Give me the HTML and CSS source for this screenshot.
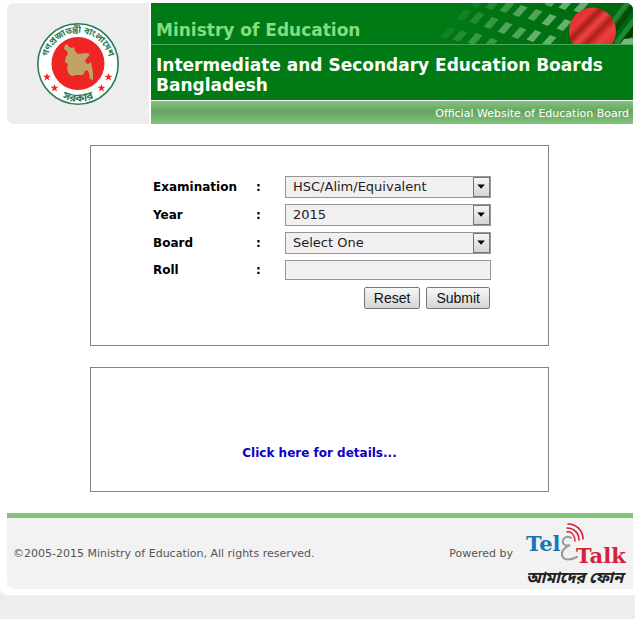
FILE: index.html
```html
<!DOCTYPE html>
<html lang="en">
<head>
<meta charset="utf-8">
<title>Intermediate and Secondary Education Boards Bangladesh</title>
<link rel="stylesheet" href="styles.css">
</head>
<body>
<div class="page">
  <header class="header">
    <div class="emblem">
      <svg width="84" height="84" viewBox="36 22 84 84" role="img" aria-label="Government seal">
        <defs>
          <path id="arc-top" d="M47.200 69A31.200 31.200 0 1 1 108.800 69"/>
          <path id="arc-bottom" d="M44 80A37.500 37.500 0 0 0 112 80"/>
          <path id="star" d="M0-4L1-1.200H4L1.600.500 2.500 3.500 0 1.700-2.500 3.500-1.600.500-4-1.200H-1Z"/>
        </defs>
        <circle cx="78" cy="64" r="40.200" fill="#fff" stroke="#2c7c5a" stroke-width="1.600"/>
        <circle cx="78" cy="63.500" r="26.500" fill="#ee2524"/>
        <path fill="#c3a268" d="M65 45l2-1 2 3 3 1 2-1 1 4 3 3 8-1 4 1-2 3-3 3 1 3 2 1 3-2 1 6 1 4 0 8-3-1-1-6-2-3-2 1-2 4-7 0-4 1-3-2-2-5 1-5-3-2 1-6 2-1-1-4-3-2z"/>
        <g fill="#ee2524">
          <use href="#star" x="47" y="77"/><use href="#star" x="54.500" y="88"/>
          <use href="#star" x="108.500" y="77"/><use href="#star" x="101.500" y="88"/>
        </g>
        <g class="seal-text">
          <text><textPath href="#arc-top" startOffset="50%" text-anchor="middle">গণপ্রজাতন্ত্রী বাংলাদেশ</textPath></text>
          <text class="seal-bottom"><textPath href="#arc-bottom" startOffset="50%" text-anchor="middle">সরকার</textPath></text>
        </g>
      </svg>
    </div>
    <div class="banner">
      <div class="ministry">
        <svg class="flag" width="200" height="41" viewBox="433 3 200 41" aria-hidden="true">
          <defs>
            <path id="tile" d="M-7.500 3.500L-1 6 7.500-3.500 1-6Z"/>
            <linearGradient id="cloth" x1="0" y1="0" x2="1" y2="1">
              <stop offset="0" stop-color="#d92f2f"/><stop offset=".27" stop-color="#e83838"/>
              <stop offset=".36" stop-color="#a91d1b"/><stop offset=".46" stop-color="#f04545"/>
              <stop offset=".57" stop-color="#b01f1c"/><stop offset=".68" stop-color="#ef4040"/>
              <stop offset="1" stop-color="#bd2220"/>
            </linearGradient>
            <linearGradient id="shade" x1="0" x2="1">
              <stop offset="0" stop-color="#005c0b" stop-opacity="0"/><stop offset="1" stop-color="#004f08" stop-opacity=".5"/>
            </linearGradient>
            <filter id="soft"><feGaussianBlur stdDeviation=".6"/></filter>
          </defs>
          <path fill="url(#shade)" d="M455 3H633V44H430Z"/>
          <g filter="url(#soft)">
            <g fill="#62b26d">
              <g opacity=".18"><use href="#tile" x="464" y="15"/><use href="#tile" x="448" y="33"/><use href="#tile" x="478" y="2"/></g>
              <g opacity=".35"><use href="#tile" x="477" y="18"/><use href="#tile" x="460" y="36"/><use href="#tile" x="493" y="4"/></g>
              <g opacity=".58"><use href="#tile" x="491" y="23"/><use href="#tile" x="475" y="39"/><use href="#tile" x="507" y="7"/><use href="#tile" x="490" y="44"/></g>
              <g opacity=".8"><use href="#tile" x="505" y="28"/><use href="#tile" x="520" y="11"/><use href="#tile" x="519" y="33"/><use href="#tile" x="535" y="15"/><use href="#tile" x="552" y="1"/></g>
              <use href="#tile" x="534" y="36"/><use href="#tile" x="549" y="20"/><use href="#tile" x="564" y="25"/>
              <use href="#tile" x="549" y="41"/><use href="#tile" x="566" y="4"/><use href="#tile" x="581" y="7"/>
            </g>
            <g fill="none" stroke-width="5">
              <path stroke="#004b08" d="M635 4L604 44"/>
              <path stroke="#238735" d="M629 1L612 23M637 16L616 44"/>
              <path stroke="#003f06" d="M637 25L622 44"/>
            </g>
            <path fill="#78b97e" d="M624 39l9-1v6h-13z"/>
            <circle cx="592.500" cy="31" r="23.500" fill="url(#cloth)"/>
          </g>
        </svg>
        <span class="ministry-name">Ministry of Education</span>
      </div>
      <h1 class="title">Intermediate and Secondary Education Boards Bangladesh</h1>
      <div class="tagline">Official Website of Education Board</div>
    </div>
  </header>

  <main class="main">
    <form class="panel form-panel">
      <div class="fields">
        <label for="exam">Examination</label><b>:</b>
        <div class="select-box">
          <select id="exam"><option>HSC/Alim/Equivalent</option></select>
          <svg class="arrow" viewBox="0 0 18 20" aria-hidden="true"><path d="M4 7h9l-4.500 5z"/></svg>
        </div>
        <label for="year">Year</label><b>:</b>
        <div class="select-box">
          <select id="year"><option>2015</option></select>
          <svg class="arrow" viewBox="0 0 18 20" aria-hidden="true"><path d="M4 7h9l-4.500 5z"/></svg>
        </div>
        <label for="board">Board</label><b>:</b>
        <div class="select-box">
          <select id="board"><option>Select One</option></select>
          <svg class="arrow" viewBox="0 0 18 20" aria-hidden="true"><path d="M4 7h9l-4.500 5z"/></svg>
        </div>
        <label for="roll">Roll</label><b>:</b>
        <input id="roll" type="text">
        <div class="actions">
          <button type="reset">Reset</button>
          <button type="submit">Submit</button>
        </div>
      </div>
    </form>
    <section class="panel link-panel">
      <a href="#">Click here for details...</a>
    </section>
  </main>

  <footer class="footer">
    <p class="copyright">©2005-2015 Ministry of Education, All rights reserved.</p>
    <p class="powered">Powered by</p>
    <svg class="logo" width="108" height="70" viewBox="522 519 108 70" role="img" aria-label="TeleTalk">
      <g fill="none" stroke-linecap="round">
        <path stroke="#999" stroke-width="2" d="M571 538C567 535 562 538 563 543C564 546 568 546 570 545C565 547 561 551 562 555C563 560 569 561 577 557"/>
        <path stroke="#d2223c" stroke-width="1.600" d="M568 524C576 524 583 530 583 539M567 528C574 528 579 533 579 540"/>
        <path stroke="#d2223c" stroke-width="1.400" d="M567 532C571 531 575 535 575 541"/>
      </g>
      <text class="logo-name" x="526" y="551" fill="#1976b6">Tel</text>
      <text class="logo-name" x="576" y="563" fill="#d2223c">Talk</text>
      <text class="logo-tag" x="526" y="583">আমাদের ফোন</text>
    </svg>
  </footer>
</div>
</body>
</html>
```
FILE: styles.css
```css
* { box-sizing: border-box; }

body {
  margin: 0;
  background: #ededed;
  font-family: Verdana, "DejaVu Sans", sans-serif;
  font-size: 12px;
  color: #000;
}

.page {
  padding: 3px 2px 6px 7px;
  background: #fff;
  border-bottom-left-radius: 7px;
}

.header {
  display: grid;
  grid-template-columns: 142px 1fr;
  gap: 2px;
}

.emblem {
  display: flex;
  align-items: center;
  justify-content: center;
  background: #ededed;
  border-radius: 7px 0 0 7px;
}

.seal-text {
  font: bold 9px "Noto Sans Bengali", "Noto Sans", sans-serif;
  fill: #2c7c5a;
}

.seal-bottom { font-size: 11px; }

.banner {
  overflow: hidden;
  border-top-right-radius: 7px;
  background: #007a14;
}

.ministry {
  position: relative;
  height: 42px;
  padding: 17px 5px 0;
  border-bottom: 1px solid #4da85a;
  line-height: 20px;
}

.flag {
  position: absolute;
  top: 0;
  right: 0;
}

.ministry-name {
  position: relative;
  color: #86dc80;
  font-size: 17px;
  font-weight: bold;
}

.title {
  height: 55px;
  margin: 0;
  padding: 10px 5px 5px;
  color: #fff;
  font-size: 17px;
  line-height: 20px;
}

.tagline {
  height: 24px;
  padding: 2px 4px 0;
  border-top: 1px solid #fff;
  background: linear-gradient(#85c07f, #64a661 45%, #82c27d);
  color: #fff;
  font-size: 11px;
  line-height: 22px;
  text-align: right;
}

.main {
  display: grid;
  gap: 21px;
  padding: 21px 84px 21px 83px;
}

.panel { border: 1px solid #828282; }

.form-panel { padding: 30px 57px 36px 62px; }

.fields {
  display: grid;
  grid-template-columns: 103px 29px 1fr;
  gap: 6px 0;
  align-items: center;
  font-weight: bold;
}

.select-box { position: relative; }

select,
input {
  display: block;
  width: 100%;
  height: 22px;
  margin: 0;
  padding: 0 20px 0 7px;
  appearance: none;
  border: 1px solid #969696;
  border-radius: 0;
  background: #f2eff0;
  color: #222;
  font: 13px/20px Verdana, "DejaVu Sans", sans-serif;
}

input { height: 20px; }

.arrow {
  position: absolute;
  top: 1px;
  right: 1px;
  width: 17px;
  height: 20px;
  border: 1px solid #777;
  background: linear-gradient(#f5f5f5, #d5d5d5);
  pointer-events: none;
}

.actions {
  grid-column: 1 / -1;
  display: flex;
  justify-content: flex-end;
  gap: 6px;
  padding: 1px 1px 0 0;
}

button {
  height: 22px;
  padding: 0 9px;
  border: 1px solid #777;
  border-radius: 2px;
  background: linear-gradient(#f7f7f7, #d4d4d4);
  color: #111;
  font: 14px/20px "Liberation Sans", Arial, sans-serif;
}

.link-panel {
  padding: 78px 0 30px;
  font-weight: bold;
  line-height: 15px;
  text-align: center;
}

.link-panel a {
  color: #0c00c4;
  text-decoration: none;
}

.footer {
  display: flex;
  align-items: center;
  height: 76px;
  padding: 0 3px 0 6px;
  border-top: 5px solid #82c57a;
  border-bottom-left-radius: 7px;
  background: #f2f2f2;
  color: #555;
  font-size: 11px;
}

.footer p { margin: 0; }

.footer .powered {
  margin-left: auto;
  padding-right: 9px;
}

.logo { overflow: visible; }

.logo-name { font: bold 21px "DejaVu Serif", serif; }

.logo-tag {
  font: italic bold 16px "Noto Sans Bengali", "Noto Sans", sans-serif;
  fill: #222;
}
```
